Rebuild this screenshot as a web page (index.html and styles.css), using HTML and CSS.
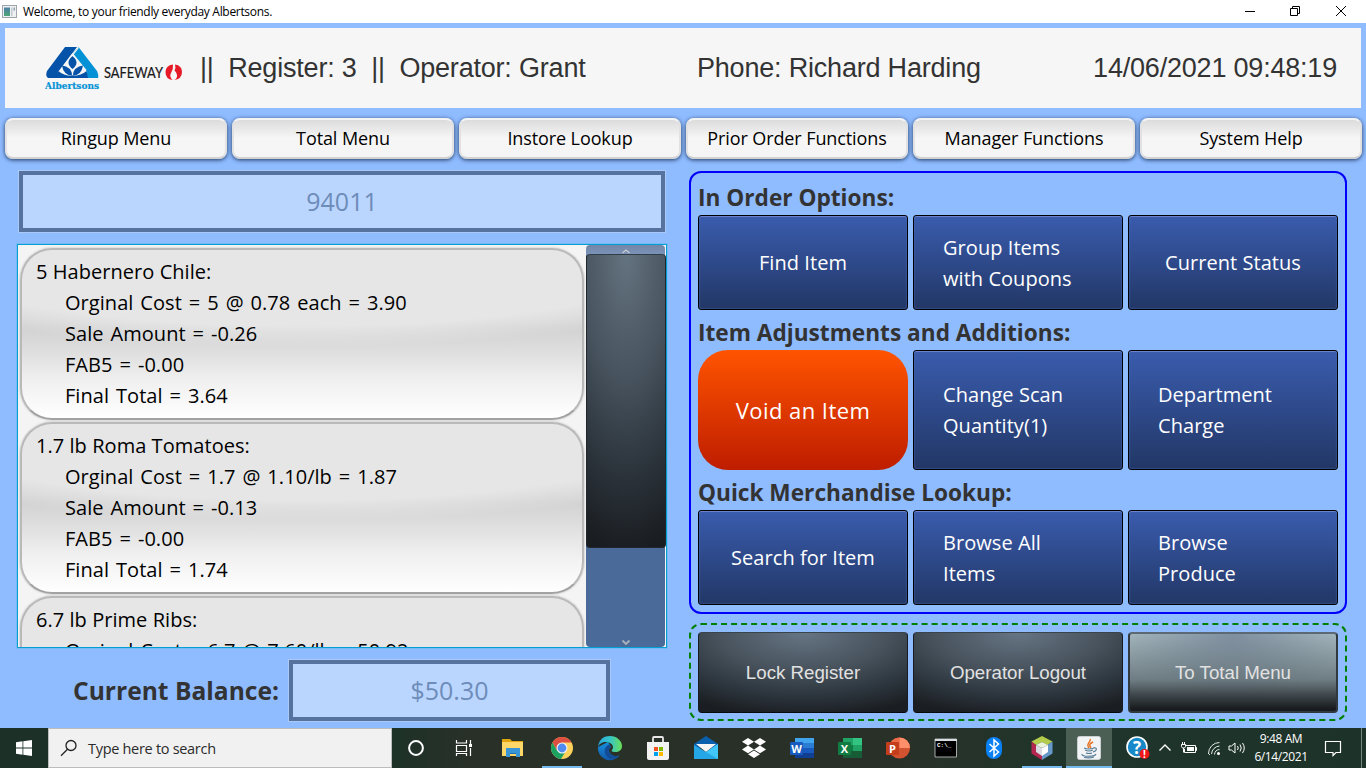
FILE: index.html
```html
<!DOCTYPE html>
<html lang="en">
<head>
<meta charset="utf-8">
<title>Welcome, to your friendly everyday Albertsons.</title>
<link rel="stylesheet" href="styles.css">
</head>
<body>
<div class="titlebar">
  <svg class="app-icon" width="16" height="14" viewBox="0 0 16 14"><defs><linearGradient id="ai" x1="0" y1="0" x2="0" y2="1"><stop offset="0" stop-color="#4d7fa5"/><stop offset="1" stop-color="#4fa577"/></linearGradient></defs><rect x=".5" y=".5" width="14" height="12" fill="#eef0f1" stroke="#9fa5aa"/><rect x="2" y="2.500" width="6" height="8.500" fill="url(#ai)"/><rect x="9" y="2.500" width="1.500" height="8.500" fill="#c5cbd0"/><rect x="11.500" y="2.500" width="1.500" height="3" fill="#8ba2b0"/></svg>
  <span class="caption">Welcome, to your friendly everyday Albertsons.</span>
  <svg class="window-controls" width="110" height="22" viewBox="0 0 110 22" fill="none" stroke="#000"><path d="M5 10.500H15M50.500 7.500h7v7h-7zM52.500 7.500v-2h7v7h-2M96 5l10 10M106 5L96 15"/></svg>
</div>
<main class="app">
  <header class="header">
    <svg class="logo" width="142" height="50" viewBox="0 0 142 50">
      <path fill="#0553a8" d="M20 3h12L15 26q3 7 13 8H3q-3-2-1-7z"/>
      <path fill="#0492d6" d="M33.500 3L52 27q2 5 1 7H29q10-1 12.500-8L28 9.500z"/>
      <path fill="#f6f6f6" d="M27.500 9L13 28q4 4 14.500 4T42 28z"/>
      <path fill="#0553a8" d="M27.500 12q8 6.500 0 13q-8-6.500 0-13M17 21.500q9 1 10.500 10q-9 0-10.500-10M38 21.500q-9 1-10.500 10q9 0 10.500-10M13.500 27q5 5 14 4.800T41.500 27L43 34H12z"/>
      <path fill="none" stroke="#f6f6f6" stroke-width="1.200" d="M33.500 3.500L27 12M27.500 26v5"/>
      <text x="0" y="44.500" textLength="54" lengthAdjust="spacingAndGlyphs" class="logo-albertsons">Albertsons</text>
      <text x="59" y="34" textLength="59" lengthAdjust="spacingAndGlyphs" class="logo-safeway">SAFEWAY</text>
      <path fill="#e71b27" d="M128 20.500q-7.500 1-7.500 7.500q0 7 7 8q-3.500-3.500-1.500-7q2.500-4 2-8.500M130 20.500q7 1 7 7.500q0 7-8 8q3.500-1.500 3-5q-.5-3-2.500-4.500q1.500-3 .5-6"/>
    </svg>
    <span class="status">||&nbsp; Register: 3 &nbsp;||&nbsp; Operator: Grant</span>
    <span class="phone">Phone: Richard Harding</span>
    <time class="clock">14/06/2021 09:48:19</time>
  </header>
  <nav class="menu">
    <button>Ringup Menu</button><button>Total Menu</button><button>Instore Lookup</button><button>Prior Order Functions</button><button>Manager Functions</button><button>System Help</button>
  </nav>
  <div class="columns">
    <section class="order">
      <div class="field entry">94011</div>
      <div class="list">
        <div class="items">
          <div class="item"><p>5 Habernero Chile:</p><p class="sub">Orginal Cost = 5 @ 0.78 each = 3.90</p><p class="sub">Sale Amount = -0.26</p><p class="sub">FAB5 = -0.00</p><p class="sub">Final Total = 3.64</p></div>
          <div class="item"><p>1.7 lb Roma Tomatoes:</p><p class="sub">Orginal Cost = 1.7 @ 1.10/lb = 1.87</p><p class="sub">Sale Amount = -0.13</p><p class="sub">FAB5 = -0.00</p><p class="sub">Final Total = 1.74</p></div>
          <div class="item"><p>6.7 lb Prime Ribs:</p><p class="sub">Orginal Cost = 6.7 @ 7.60/lb = 50.92</p></div>
        </div>
        <div class="scrollbar">
          <svg class="arrow-up" width="10" height="9" viewBox="0 0 10 9" fill="none" stroke="#c8ccd2" stroke-width="1.200"><path d="M1.500 8L5 5l3.500 3"/></svg>
          <div class="thumb"></div>
          <svg class="arrow-down" width="10" height="9" viewBox="0 0 10 9" fill="none" stroke="#a9b1bb" stroke-width="1.800"><path d="M1.500 2.500L5 6l3.500-3.500"/></svg>
        </div>
      </div>
      <div class="balance"><span class="balance-label">Current Balance:</span><div class="field total">$50.30</div></div>
    </section>
    <section class="actions">
      <div class="options">
        <h2>In Order Options:</h2>
        <div class="row"><button>Find Item</button><button class="left">Group Items<br>with Coupons</button><button>Current Status</button></div>
        <h2>Item Adjustments and Additions:</h2>
        <div class="row tall"><button class="void">Void an Item</button><button class="left">Change Scan<br>Quantity(1)</button><button class="left">Department<br>Charge</button></div>
        <h2>Quick Merchandise Lookup:</h2>
        <div class="row"><button>Search for Item</button><button class="left">Browse All<br>Items</button><button class="left">Browse<br>Produce</button></div>
      </div>
      <div class="session"><button>Lock Register</button><button>Operator Logout</button><button class="go-total">To Total Menu</button></div>
    </section>
  </div>
</main>
<footer class="taskbar">
  <div class="start"><svg width="16" height="16" viewBox="0 0 16 16" fill="#fff"><path d="M0 2.200L6.500 1.300V7.600H0zM7.300 1.200L16 0v7.600H7.300zM0 8.400h6.500v6.300L0 13.800zM7.300 8.400H16V16l-8.700-1.200z"/></svg></div>
  <div class="search"><svg width="18" height="18" viewBox="0 0 18 18" fill="none" stroke="#222" stroke-width="1.300"><circle cx="11" cy="6.500" r="5"/><path d="M7.500 10.200L1 16.700"/></svg><span>Type here to search</span></div>
  <div class="apps">
    <div class="app-slot"><svg width="24" height="24" viewBox="0 0 24 24"><circle cx="12" cy="12" r="6.900" fill="none" stroke="#fff" stroke-width="2"/></svg></div>
    <div class="app-slot"><svg width="24" height="24" viewBox="0 0 24 24" fill="none" stroke="#fff" stroke-width="1.200"><path d="M4.500 4v3h10V4M4.500 9.500h10v6h-10zM4.500 20v-2.500h10V20M18.500 4v4M18.500 12v8"/><path fill="#fff" stroke="none" d="M17 8h3v3h-3z"/></svg></div>
    <div class="app-slot after-system"><svg width="24" height="24" viewBox="0 0 24 24"><path fill="#e2a50d" d="M1 3h8l2 2h11v4H1z"/><path fill="#ffd668" d="M1 6h21v14H1z"/><path fill="#3995d5" d="M5 12h14v9h-4v-4H9v4H5z"/><path fill="#1e71b8" d="M9 17h6v1H9z"/></svg></div>
    <div class="app-slot open"><svg width="24" height="24" viewBox="0 0 24 24"><circle cx="12" cy="12" r="11" fill="#fcd15b"/><path fill="#dd4f40" d="M2.500 6.500a11 11 0 0 1 19.100 0H12L7 14.500z"/><path fill="#1ca261" d="M2.500 6.500A11 11 0 0 0 11 23l5-8.200-9-.3z"/><circle cx="12" cy="12" r="5.500" fill="#f3f5f7"/><circle cx="12" cy="12" r="4.400" fill="#508cf0"/></svg></div>
    <div class="app-slot"><svg width="26" height="26" viewBox="0 0 26 26"><defs><linearGradient id="eg"><stop offset="0" stop-color="#2aa8df"/><stop offset=".5" stop-color="#36c5c8"/><stop offset="1" stop-color="#69df57"/></linearGradient><linearGradient id="eb" x1="0" y1="0" x2="0" y2="1"><stop offset="0" stop-color="#1693df"/><stop offset="1" stop-color="#1157a9"/></linearGradient></defs><path fill="url(#eb)" d="M1 12a12 12 0 0 0 21.500 8.500C18 22 13 20 12 16c-.4-2 .5-3 2-4l-3-5z"/><path fill="#134c95" d="M12 9.500c-5 2-6 9-1 13 3 2.500 9 1 11.500-2C18 22 13 20 12 16c-.4-2 .5-3 2-4z"/><path fill="url(#eg)" d="M1 12C2 4 7 1 13 1c7 0 12 5 12 10 0 4-3 6-7 6-3 0-4-1-3-2 3-4-1-8-6-8-4 0-7 2-8 5z"/></svg></div>
    <div class="app-slot"><svg width="26" height="26" viewBox="0 0 26 26"><path fill="none" stroke="#e7e7e7" stroke-width="1.800" d="M8 9V3q0-1 1-1h8q1 0 1 1v6"/><path fill="#f3f3f3" d="M2 7h22v16q0 2-2 2H4q-2 0-2-2z"/><path fill="#f15224" d="M9 12h4v4H9z"/><path fill="#7eba00" d="M14 12h4v4h-4z"/><path fill="#00a2ee" d="M9 17h4v4H9z"/><path fill="#ffb900" d="M14 17h4v4h-4z"/></svg></div>
    <div class="app-slot"><svg width="26" height="26" viewBox="0 0 26 26"><path fill="#0b60ae" d="M1 9l12-8 12 8v4H1z"/><path fill="#f5f5f5" d="M3 9h20L13 17z"/><path fill="#25a7e7" d="M1 10l12 7 12-8v15H1z"/><path fill="#40c6f8" d="M13 17l12 7V9z"/></svg></div>
    <div class="app-slot"><svg width="24" height="22" viewBox="0 0 24 22" fill="#fff"><path d="M6 1l6 3.800-6 3.800L0 4.800zM18 1l6 3.800-6 3.800-6-3.800zM6 8.600l6 3.800-6 3.800-6-3.800zM18 8.600l6 3.800-6 3.800-6-3.800zM12 13.500l6 3.800-6 3.700-6-3.700z"/></svg></div>
    <div class="app-slot"><svg width="24" height="22" viewBox="0 0 24 22"><path fill="#41a5ee" d="M5 1h19v5H5z"/><path fill="#2b7cd3" d="M5 6h19v5H5z"/><path fill="#185abd" d="M5 11h19v5H5z"/><path fill="#103f91" d="M5 16h19v5H5z"/><rect y="5" width="13" height="13" rx="1" fill="#185abd"/><text x="6.500" y="15.500" class="office">W</text></svg></div>
    <div class="app-slot"><svg width="24" height="22" viewBox="0 0 24 22"><path fill="#21a366" d="M5 1h10v7H5z"/><path fill="#33c481" d="M15 1h9v7h-9z"/><path fill="#107c41" d="M5 8h10v7H5z"/><path fill="#21a366" d="M15 8h9v6h-9z"/><path fill="#185c37" d="M5 14h19v7H5z"/><rect y="5" width="13" height="13" rx="1" fill="#107c41"/><text x="6.500" y="15.500" class="office">X</text></svg></div>
    <div class="app-slot"><svg width="24" height="22" viewBox="0 0 24 22"><circle cx="13.500" cy="11" r="10.500" fill="#d35230"/><path fill="#ed6c47" d="M13.500.5A10.500 10.500 0 0 0 3 11h10.500z"/><path fill="#ff8f6b" d="M13.500.5A10.500 10.500 0 0 1 24 11H13.500z"/><rect y="5" width="13" height="13" rx="1" fill="#c43e1c"/><text x="6.500" y="15.500" class="office">P</text></svg></div>
    <div class="app-slot"><svg width="24" height="20" viewBox="0 0 24 20"><path fill="#000" stroke="#a5a9aa" d="M1 1h21.500v18H1z"/><path fill="#d7dde0" d="M1 1h22v2H1z"/><text x="3" y="9" class="prompt">C:\_</text></svg></div>
    <div class="app-slot"><svg width="20" height="24" viewBox="0 0 20 24"><rect x="2" y="1" width="16" height="22" rx="8" fill="#0a80f5"/><path fill="none" stroke="#fff" stroke-width="1.500" d="M5.500 8l9 8-4.500 4V4l4.500 4-9 8"/></svg></div>
    <div class="app-slot open"><svg width="24" height="26" viewBox="0 0 24 26"><path fill="#b4cc4b" d="M12 1l10.500 5.500-5 3.500L12 7l-6 3-4.500-3.500z"/><path fill="#b42650" d="M1.500 6.500L6 10v7l6 3v5L1.500 18.500z"/><path fill="#6699ca" d="M22.500 6.500v12L12 25v-5l5.500-3v-7z"/><path fill="#edf4dc" d="M12 7l6 3-6 3-6-3z"/><path fill="#dadce4" d="M6 10l6 3v8l-6-4z"/><path fill="#fff" d="M18 10l-6 3v8l6-4z"/></svg></div>
    <div class="app-slot open active"><svg width="24" height="24" viewBox="0 0 24 24"><rect x=".5" y=".5" width="23" height="23" rx="2" fill="#f1f3f4" stroke="#cbd1d2"/><path fill="none" stroke="#e76f1f" stroke-width="1.400" d="M13 3c2 3-5 4-1 9M16 6c-4 2-4 3-2 6"/><path fill="none" stroke="#557995" stroke-width="1.100" d="M7 12q5 2 10 0M8 14q4 2 8 0M9 17q3 1 6 0M16 12c5-1 4 3 0 4M5 18c-1 3 13 3 14 0M7 21.500q6 1 10-.5"/></svg></div>
  </div>
  <div class="tray">
    <svg class="help" width="24" height="24" viewBox="0 0 24 24"><circle cx="11" cy="11" r="10" fill="#1789c9" stroke="#fff" stroke-width="1.600"/><text x="11" y="18" class="question">?</text><circle cx="18.500" cy="18" r="5" fill="#ef1717"/><text x="18.500" y="21.500" class="alert">!</text></svg>
    <svg class="caret" width="14" height="10" viewBox="0 0 14 10" fill="none" stroke="#fff" stroke-width="1.400"><path d="M1.500 7.500L7 2l5.500 5.500"/></svg>
    <svg class="battery" width="18" height="16" viewBox="0 0 18 16" fill="none" stroke="#fff"><path d="M5.500 5.500h10v7H4.500V9M15.500 7.500h1v3h-1M2.500 2v3M4.500 2v3M1.500 4.500h4v2l-1 1.500h-2L1.500 6.500zM3.500 8v4.500"/><path fill="#fff" stroke="none" d="M7 7h7v4H7z"/></svg>
    <svg class="wifi" width="14" height="15" viewBox="0 0 14 15" fill="none" stroke="#e4e8e5"><path d="M1.500 12.500A11 11 0 0 1 12.500 1.500M4.500 13A8.500 8.500 0 0 1 12.500 5M7.500 13.500a5.500 5.500 0 0 1 5-5M1 12l2 2"/><circle cx="11.500" cy="12.500" r="1.500" fill="#fff" stroke="none"/></svg>
    <svg class="volume" width="18" height="14" viewBox="0 0 18 14" fill="none" stroke="#fff"><path d="M1 5h2.500L7 2v10L3.500 9H1zM9.500 5q1.500 2 0 4M12 3.500q2.500 3.500 0 7M14.500 2q3.500 5 0 10"/></svg>
    <div class="datetime"><span>9:48 AM</span><span>6/14/2021</span></div>
    <svg class="notice" width="18" height="17" viewBox="0 0 18 17" fill="none" stroke="#fff" stroke-width="1.200"><path d="M1.500 1.500h15v11H12L9 15.500v-3H1.500z"/></svg>
    <div class="peek"></div>
  </div>
</footer>
</body>
</html>
```
FILE: styles.css
```css
* { box-sizing: border-box; }
body { margin: 0; width: 1366px; height: 768px; overflow: hidden; display: flex; flex-direction: column; font-family: "Open Sans", "Noto Sans", sans-serif; background: #8fbbff; }
button { font: inherit; margin: 0; padding: 0; border: 0; letter-spacing: inherit; }
h2, p { margin: 0; }
svg { display: block; flex: none; }

.titlebar { height: 23px; background: #fff; display: flex; align-items: center; padding: 0 16px 0 2px; }
.caption { margin-left: 5px; font-size: 12px; letter-spacing: -0.310px; color: #000; }
.window-controls { margin-left: auto; }

.app { height: 705px; padding: 5px 4px 0 5px; background: #8fbbff; }
.header { height: 80px; width: 1356px; background: #f6f6f6; display: grid; grid-template-columns: 155px 497px 1fr auto; align-items: center; padding: 0 24px 0 40px; font-family: "Liberation Sans", Arial, sans-serif; font-size: 27px; letter-spacing: -.2px; color: #333; white-space: pre; }
.status, .phone, .clock { padding-top: 1px; }
.logo { margin-top: 1px; letter-spacing: 0; }
.logo-albertsons { font: bold 10px "DejaVu Serif", serif; fill: #0492d6; stroke: #0492d6; stroke-width: .2px; }
.logo-safeway { font: 16px Lato, sans-serif; fill: #191919; stroke: #191919; stroke-width: .2px; }

.menu { display: flex; gap: 5px; margin-top: 10px; }
.menu button { width: 222px; height: 41px; padding-bottom: 2px; border-radius: 8px; background: linear-gradient(#dcdcdc, #f6f6f6 50%, #f5f5f5); border: 2px solid #d2d2d2; border-top-color: #f4f4f4; border-left-color: #e2e2e2; border-right-color: #e2e2e2; box-shadow: 0 1px 4px #1e375a; font-size: 18px; letter-spacing: -.1px; color: #000; }

.columns { display: flex; margin-top: 12px; }
.order { width: 650px; margin-left: 12px; }
.field { border: 4px solid #56739f; box-shadow: 0 0 0 1px #a9c9f8; background: #bad6ff; color: #6e8cb9; font-size: 25px; padding-bottom: 2px; display: flex; align-items: center; justify-content: center; }
.entry { height: 61px; margin: 0 2px; }
.list { height: 404px; margin-top: 12px; border: 1px solid #039ed3; box-shadow: 0 0 0 1px #77b9f3; background: #f4f4f4; display: flex; overflow: hidden; }
.items { width: 566px; padding: 3px 0 0 2px; margin-right: 2px; }
.item { width: 564px; height: 172px; margin-bottom: 2px; padding: 6px 14px; border: 2px solid #b9b9b9; border-bottom-color: #a2a2a2; border-radius: 32px; background: radial-gradient(ellipse 90% 58% at 50% 0, #e6e6e6 78%, rgba(230,230,230,0) 100%), linear-gradient(#dedede 0, #d2d2d2 46%, #dcdcdc 58%, #f0f0f0 78%, #fff 100%); box-shadow: 0 0 2px #aaa; font-size: 20px; line-height: 31px; letter-spacing: .05px; color: #000; white-space: nowrap; }
.sub { padding-left: 29px; word-spacing: 1.700px; }
.scrollbar { width: 79px; height: 402px; border-radius: 4px; background: #4a6b9a; display: flex; flex-direction: column; align-items: center; background-image: linear-gradient(#7386a7 0, #7b94ba 10px, #4a6b9a 11px); }
.thumb { width: 80px; height: 294px; flex: none; border: 1px solid #20262b; border-top-color: #333d45; border-radius: 4px; background: radial-gradient(ellipse 110px 300px at 50% 0, #647380, #48545f 40%, #2c343c 72%, #191c20); }
.arrow-down { margin-top: auto; }
.balance { display: flex; align-items: center; margin-top: 12px; }
.balance-label { width: 206px; margin-left: 56px; font-size: 24.600px; font-weight: 700; color: #333; white-space: nowrap; }
.total { width: 321px; height: 61px; margin-left: 10px; }

.actions { width: 658px; margin-left: 22px; }
.options { height: 443px; padding: 6px 7px 0; border: 2px solid #0000fb; border-radius: 12px; }
.options h2 { height: 36px; font-size: 22.650px; line-height: 38px; font-weight: 700; color: #333; white-space: nowrap; }
.row { display: grid; grid-template-columns: repeat(3, 210px); gap: 5px; height: 95px; margin-bottom: 4px; }
.row.tall { height: 120px; }
.row button { border: 1px solid #000; border-radius: 3px; background: linear-gradient(#3a5cae, #223766); box-shadow: inset 0 0 2px #5271bd, inset 0 1px #7788cf; color: #fff; font-size: 20px; line-height: 31px; letter-spacing: .05px; }
.row .left { text-align: left; padding-left: 29px; }
.row .void { border: 0; border-radius: 30px; background: linear-gradient(#ff5400, #be1d00); box-shadow: none; font-size: 22px; letter-spacing: .45px; }
.session { height: 98px; margin-top: 9px; border: 2px dashed #008000; border-radius: 12px; padding: 7px; display: flex; gap: 5px; }
.session button { width: 210px; height: 81px; border: 1px solid #171b20; border-top-color: #39434c; border-bottom-color: #090a0b; border-radius: 4px; background: radial-gradient(ellipse 190px 84px at 50% 0, #667584, #47525c 45%, #2c353d 75%, #1a1d21); color: #e2e2e2; font-family: "Liberation Sans", Arial, sans-serif; font-size: 18.700px; }
.session .go-total { border: 2px solid #31393e; border-top-color: #5c6975; background: linear-gradient(transparent, rgba(80,93,98,.65) 60%, rgba(58,66,71,.93) 78%, #191c1e 97%), radial-gradient(ellipse 110px 70px at 50% 0, #8090a1, #a4b6bd); }

.taskbar { height: 40px; display: flex; background: linear-gradient(90deg, #1d3028 0, #1d3228 390px, #293028 470px, #293028 900px, #20352b 1050px, #1d3229); color: #fff; }
.start { width: 48px; display: grid; place-items: center; }
.search { width: 344px; background: #f1f1f1; border: 1px solid #bcbcbc; display: flex; align-items: center; gap: 10px; padding-left: 11px; color: #2b2b2b; font-size: 14.500px; letter-spacing: -.3px; }
.apps { display: flex; }
.app-slot { width: 48px; height: 40px; display: grid; place-items: center; }
.after-system { margin: 0 1px; }
.app-slot.open { border-bottom: 2px solid #76b9ed; width: 40px; margin: 0 4px; padding-top: 2px; }
.app-slot.active { width: 46px; margin: 0; background: #4b5f54; }
.office { font: bold 11px "Open Sans", sans-serif; fill: #fff; text-anchor: middle; }
.prompt { font: bold 6px "Liberation Mono", monospace; fill: #fff; }
.tray { margin-left: auto; display: flex; align-items: center; width: 240px; }
.question { font: bold 17px "Open Sans", sans-serif; fill: #fff; text-anchor: middle; }
.alert { font: bold 10px "Open Sans", sans-serif; fill: #fff; text-anchor: middle; }
.caret { margin-left: 8px; }
.battery { margin-left: 8px; }
.wifi { margin-left: 9px; }
.volume { margin-left: 7px; }
.datetime { width: 70px; display: flex; flex-direction: column; align-items: center; font-size: 12px; line-height: 18px; letter-spacing: -.4px; white-space: nowrap; }
.notice { margin-left: 8px; }
.peek { width: 1px; height: 40px; margin-left: auto; margin-right: 4px; background: #78847d; }
```
